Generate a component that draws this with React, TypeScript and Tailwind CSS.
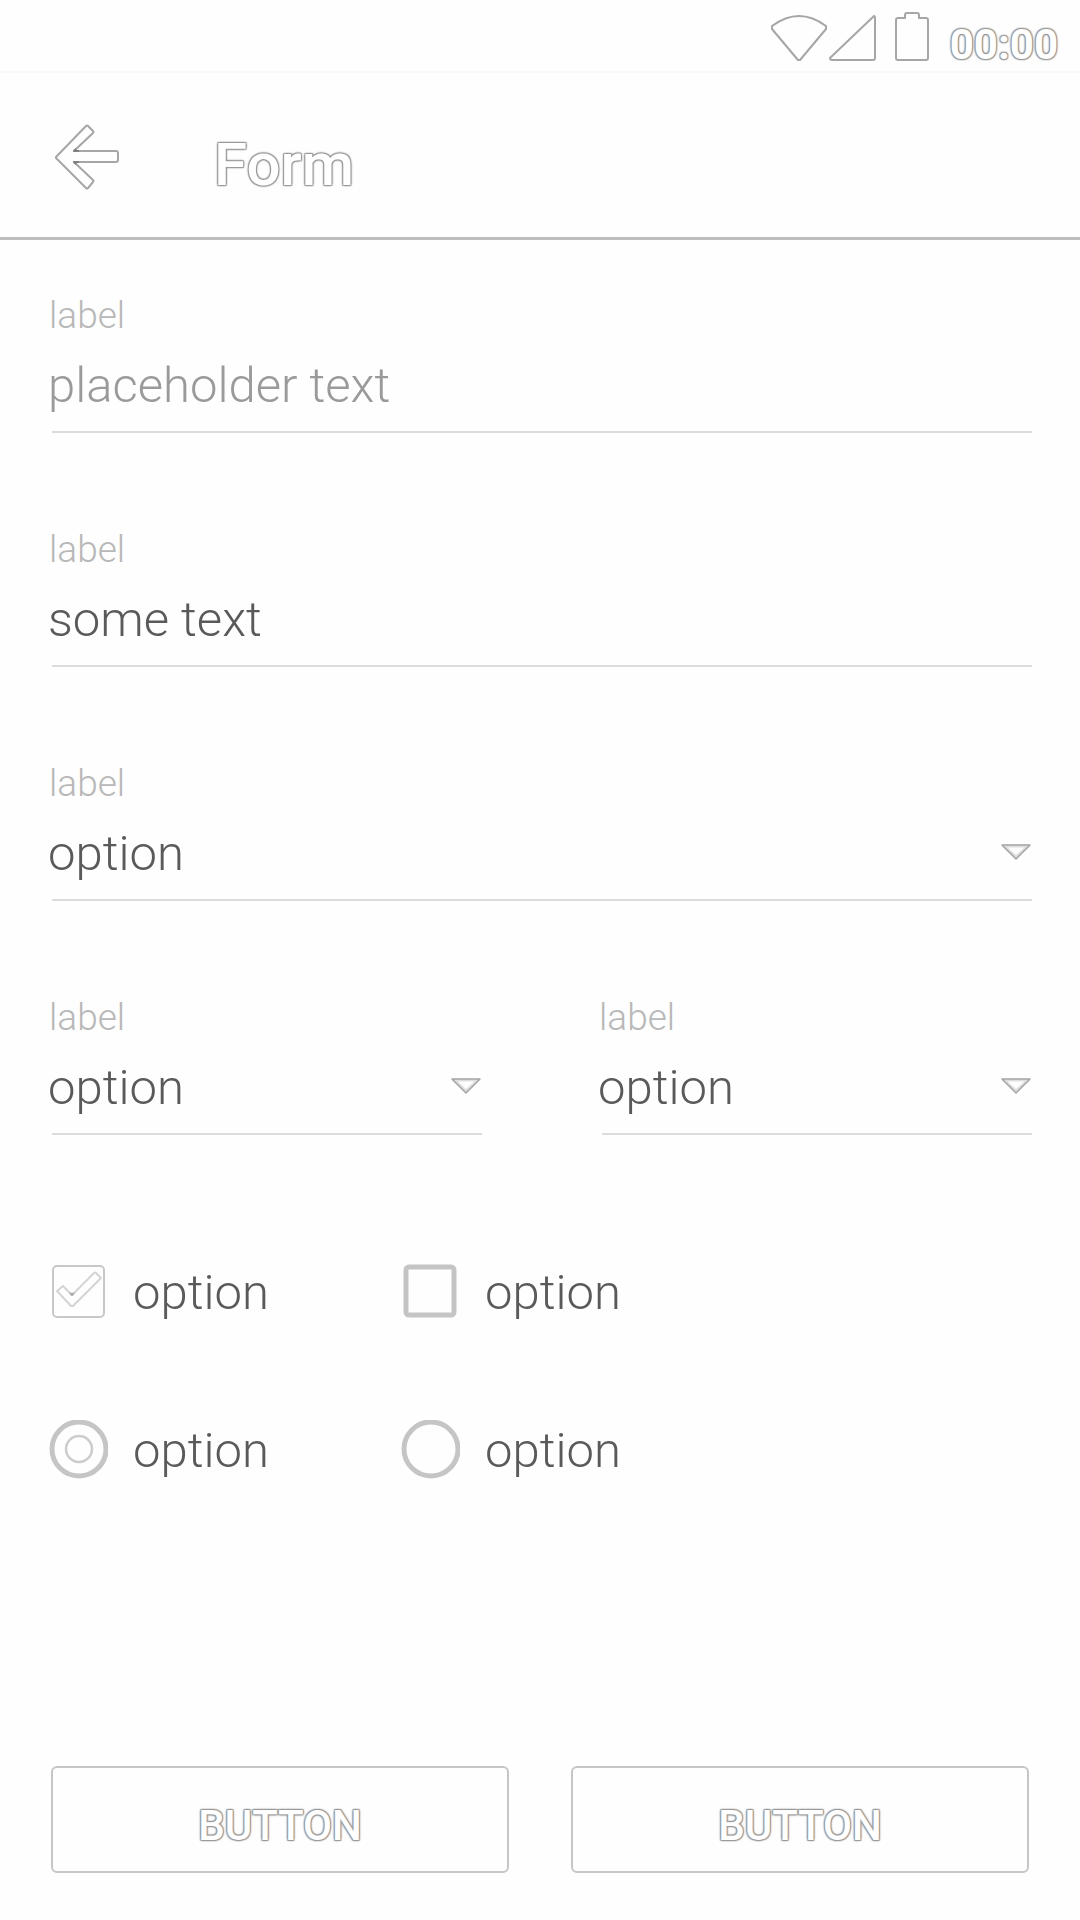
import { useId } from "react";

const outlined =
  "text-white antialiased [-webkit-text-stroke:4px_white] [text-shadow:1px_1px_1px_#999,-1px_1px_1px_#999,1px_-1px_1px_#999,-1px_-1px_1px_#999,0_0_3px_#aaa] [paint-order:stroke_fill]";

function StatusBar() {
  return (
    <div className="flex h-[73px] justify-end border-b-2 border-[#f8f8f8] pr-[22px]">
      <svg className="h-[70px] w-[180px]" viewBox="0 0 180 70" fill="none" stroke="#a6a6a6" strokeWidth="2" strokeLinejoin="round" aria-hidden="true">
        <path d="M23 26Q50 6 77 26L77 29L51 60H49L23 29Z" />
        <path d="M125 16L81 58Q81 60 83 60H124Q126 60 126 58V18Q126 16 125 16Z" />
        <path d="M149 18H156V15Q156 13 158 13H168Q170 13 170 15V18H177Q179 18 179 20V58Q179 60 177 60H149Q147 60 147 58V20Q147 18 149 18Z" />
      </svg>
      <span className={`ml-[21px] mt-[19px] text-[42px] leading-[52px] font-bold ${outlined}`}>00:00</span>
    </div>
  );
}

function AppBar() {
  return (
    <header className="flex h-[167px] items-center border-b-[3px] border-[#bdbdbd] pt-1 pl-[52px]">
      <button type="button" aria-label="Back" className="h-[70px] w-[70px]">
        <svg viewBox="0 0 70 70" fill="none" stroke="#a6a6a6" strokeWidth="2" strokeLinejoin="round" aria-hidden="true">
          <path d="M4 35L34 4Q35 3 36 4L41 9Q42 10 41 11L22 29H64Q66 29 66 31V38Q66 40 64 40H22L41 58Q42 59 41 60L36 66Q35 67 34 66L4 36Z" />
          <path d="M27 29H22L24 27M27 40H22L24 42" stroke="#808080" />
        </svg>
      </button>
      <h1 className={`mt-4 ml-[92px] text-[60px] leading-[64px] font-medium ${outlined}`}>Form</h1>
    </header>
  );
}

const labelClass = "block pl-px text-[37px] leading-[44px] text-[#b8b8b8]";
const controlClass =
  "block h-16 w-full appearance-none bg-transparent text-[49px] leading-[64px] font-light text-[#5a5a5a] outline-none placeholder:text-[#9a9a9a]";

function Underline() {
  return <div className="mt-[13px] ml-1 h-0.5 bg-[#dcdcdc]" />;
}

function TextField({ value, placeholder }: { value?: string; placeholder?: string }) {
  const id = useId();
  return (
    <div>
      <label htmlFor={id} className={labelClass}>label</label>
      <input id={id} type="text" defaultValue={value} placeholder={placeholder} className={`mt-4 ${controlClass}`} />
      <Underline />
    </div>
  );
}

function SelectField() {
  const id = useId();
  return (
    <div className="min-w-0 flex-1">
      <label htmlFor={id} className={labelClass}>label</label>
      <div className="relative mt-4">
        <select id={id} className={controlClass}>
          <option>option</option>
        </select>
        <svg className="pointer-events-none absolute top-5 right-0 h-5 w-8" viewBox="0 0 32 20" fill="none" strokeLinejoin="round" aria-hidden="true">
          <path d="M4 4H28L16 15Z" stroke="#dedede" strokeWidth="3" />
          <path d="M2 3H30L16 17Z" stroke="#a6a6a6" strokeWidth="1.5" />
        </svg>
      </div>
      <Underline />
    </div>
  );
}

function Choice({ type, checked = false }: { type: "checkbox" | "radio"; checked?: boolean }) {
  return (
    <label className="flex items-center text-[49px] leading-[64px] font-light text-[#5a5a5a]">
      <span className="relative flex size-[60px] items-center justify-center">
        <input type={type} name={type} defaultChecked={checked} className="peer absolute inset-0 appearance-none outline-none" />
        {type === "checkbox" ? (
          <>
            <svg className="pointer-events-none absolute inset-0 peer-checked:hidden" viewBox="0 0 60 60" fill="none" aria-hidden="true">
              <rect x="6" y="5" width="48" height="48" rx="3" stroke="#c4c4c4" strokeWidth="5" />
            </svg>
            <svg className="pointer-events-none absolute inset-0 hidden peer-checked:block" viewBox="0 0 60 60" fill="none" strokeLinejoin="round" aria-hidden="true">
              <rect x="5" y="4" width="51" height="51" rx="4" stroke="#c8c8c8" strokeWidth="2" />
              <path d="M15 24L24 33L46 11Q47 10 48 11L53 16L25 44H23L9 29Z" stroke="#d4d4d4" strokeWidth="2" />
              <path d="M22 31L24 33L26 31" stroke="#aaa" strokeWidth="2" />
            </svg>
          </>
        ) : (
          <>
            <svg className="pointer-events-none absolute inset-0" viewBox="0 0 60 60" fill="none" aria-hidden="true">
              <circle cx="31" cy="29" r="27" stroke="#c5c5c5" strokeWidth="5" />
            </svg>
            <svg className="pointer-events-none absolute inset-0 hidden peer-checked:block" viewBox="0 0 60 60" fill="none" aria-hidden="true">
              <circle cx="31" cy="29" r="13" stroke="#cccccc" strokeWidth="2.5" />
            </svg>
          </>
        )}
      </span>
      <span className="ml-[25px] pt-0.5">option</span>
    </label>
  );
}

function ActionButton() {
  return (
    <button type="button" className="h-[107px] flex-1 rounded-md border-2 border-[#c6c6c6] pt-3">
      <span className={`text-[42px] leading-[48px] font-medium ${outlined}`}>BUTTON</span>
    </button>
  );
}

export default function App() {
  return (
    <div className="flex min-h-screen flex-col bg-[#fefefe] font-[Roboto,sans-serif]">
      <StatusBar />
      <AppBar />
      <form className="flex flex-1 flex-col">
        <div className="flex flex-col gap-[95px] px-12 pt-[54px] font-light">
          <TextField placeholder="placeholder text" />
          <TextField value="some text" />
          <SelectField />
          <div className="flex gap-[116px]">
            <SelectField />
            <SelectField />
          </div>
          <div className="mt-[29px] grid grid-cols-[352px_352px] gap-y-[92px]">
            <Choice type="checkbox" checked />
            <Choice type="checkbox" />
            <Choice type="radio" checked />
            <Choice type="radio" />
          </div>
        </div>
        <div className="mt-auto flex gap-[62px] px-[51px] pt-24 pb-[47px]">
          <ActionButton />
          <ActionButton />
        </div>
      </form>
    </div>
  );
}
